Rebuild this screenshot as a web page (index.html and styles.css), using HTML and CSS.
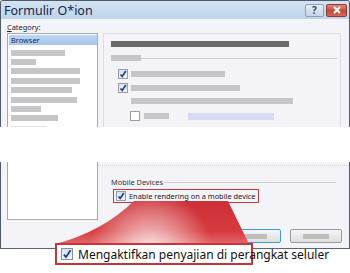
FILE: index.html
```html
<!DOCTYPE html>
<html lang="id">
<head>
    <meta charset="UTF-8">
    <title>Formulir Option</title>
<link rel="stylesheet" href="styles.css">
</head>
<body>
    <div class="scene">
        <!-- upper part of the dialog -->
        <div class="win win-top">
            <div class="titlebar">
                <span class="title">Formulir O*ion</span>
                <div class="tb-buttons">
                    <span class="tb-help">?</span>
                    <span class="tb-close">
                        <svg width="10" height="8" viewBox="0 0 10 8"><path d="M2 1 L8 7 M8 1 L2 7" stroke="#fff" stroke-width="2"/></svg>
                    </span>
                </div>
            </div>
            <div class="client">
                <div class="left-col">
                    <div class="cat-label"><u>C</u>ategory:</div>
                    <div class="listbox">
                        <div class="item selected">Browser</div>
                        <div class="item"><span class="blur" style="width:54px"></span></div>
                        <div class="item"><span class="blur" style="width:25px"></span></div>
                        <div class="item"><span class="blur" style="width:69px"></span></div>
                        <div class="item"><span class="blur" style="width:69px"></span></div>
                        <div class="item"><span class="blur" style="width:61px"></span></div>
                        <div class="item"><span class="blur" style="width:66px"></span></div>
                        <div class="item"><span class="blur" style="width:30px"></span></div>
                        <div class="item"><span class="blur" style="width:47px"></span></div>
                        <div class="item"><span class="blur faint" style="width:36px"></span></div>
                    </div>
                </div>
                <div class="panel">
                    <div class="dark-bar"></div>
                    <div class="sec-head">
                        <span class="blur" style="width:30px"></span>
                        <span class="rule"></span>
                    </div>
                    <div class="opt-row">
                        <span class="check on"><svg width="8" height="8" viewBox="0 0 8 8"><path d="M1.5 4.5 L3.2 6.5 L6.8 1" fill="none" stroke="#1d3b8c" stroke-width="1.6"/></svg></span>
                        <span class="blur" style="width:94px"></span>
                    </div>
                    <div class="opt-row">
                        <span class="check on"><svg width="8" height="8" viewBox="0 0 8 8"><path d="M1.5 4.5 L3.2 6.5 L6.8 1" fill="none" stroke="#1d3b8c" stroke-width="1.6"/></svg></span>
                        <span class="blur" style="width:109px"></span>
                    </div>
                    <div class="opt-text"><span class="blur" style="width:162px"></span></div>
                    <div class="opt-row sub">
                        <span class="check"></span>
                        <span class="blur" style="width:25px"></span>
                        <span class="blur blue" style="width:86px"></span>
                    </div>
                </div>
            </div>
        </div>

        <div class="tear"></div>

        <!-- lower part of the dialog -->
        <div class="win win-bottom">
            <div class="left-col">
                <div class="listbox listbox-end"></div>
            </div>
            <div class="lower-panel">
                <div class="legend">
                    <span>Mobile Devices</span>
                    <span class="rule"></span>
                </div>
                <div class="hl-row">
                    <span class="check on"><svg width="8" height="8" viewBox="0 0 8 8"><path d="M1.5 4.5 L3.2 6.5 L6.8 1" fill="none" stroke="#1d3b8c" stroke-width="1.6"/></svg></span>
                    <span class="hl-text">Enable rendering on a mobile device</span>
                </div>
                <div class="buttons">
                    <span class="btn default"><span class="blur" style="width:23px"></span></span>
                    <span class="btn"><span class="blur" style="width:26px"></span></span>
                </div>
            </div>
        </div>

        <!-- callout overlay -->
        <svg class="funnel" width="350" height="273" viewBox="0 0 350 273">
            <defs>
                <linearGradient id="fg" x1="0" y1="201" x2="0" y2="244" gradientUnits="userSpaceOnUse">
                    <stop offset="0" stop-color="#cc2f35"/>
                    <stop offset="0.7" stop-color="#d63a3e"/>
                    <stop offset="1" stop-color="#e4666a"/>
                </linearGradient>
                <radialGradient id="glow" cx="150" cy="252" r="62" gradientUnits="userSpaceOnUse">
                    <stop offset="0" stop-color="#fff" stop-opacity="0.85"/>
                    <stop offset="0.6" stop-color="#fff" stop-opacity="0.35"/>
                    <stop offset="1" stop-color="#fff" stop-opacity="0"/>
                </radialGradient>
            </defs>
            <path d="M134 201 L228 201 L249 244 L55 244 Q102 232 134 201 Z" fill="url(#fg)"/>
            <path d="M134 201 L228 201 L249 244 L55 244 Q102 232 134 201 Z" fill="url(#glow)"/>
        </svg>
        <div class="callout">
            <span class="check big on"><svg width="10" height="10" viewBox="0 0 8 8"><path d="M1.5 4.5 L3.2 6.5 L6.8 1" fill="none" stroke="#1d3b8c" stroke-width="1.4"/></svg></span>
            <span class="callout-text">Mengaktifkan penyajian di perangkat seluler</span>
        </div>
    </div>
</body>
</html>
```

FILE: styles.css
```css
body {
    margin: 0;
    background: #fff;
    font-family: "Noto Sans", "Liberation Sans", sans-serif;
}
.scene {
    position: relative;
    width: 350px;
    height: 273px;
    overflow: hidden;
}
.win {
    box-sizing: border-box;
    width: 350px;
    background: #f4f3f7;
    border-left: 1px solid #4f5b6b;
    border-right: 1px solid #4f5b6b;
    overflow: hidden;
}
.win-top {
    height: 127px;
    border-top: 1px solid #4f5b6b;
    border-radius: 3px 3px 0 0;
}
.titlebar {
    height: 18px;
    display: flex;
    align-items: center;
    justify-content: space-between;
    background: linear-gradient(#d3e3f2, #bed4ea);
}
.title {
    font-size: 12.5px;
    color: #16244a;
    padding-left: 3px;
}
.tb-buttons {
    display: flex;
    gap: 2px;
    margin-right: 2px;
}
.tb-help, .tb-close {
    box-sizing: border-box;
    height: 13px;
    display: flex;
    align-items: center;
    justify-content: center;
    border-radius: 2px;
}
.tb-help {
    width: 19px;
    font-size: 10px;
    font-weight: bold;
    color: #3b4a60;
    border: 1px solid #8da2ba;
    background: linear-gradient(#e4edf6, #c4d4e6);
}
.tb-close {
    width: 21px;
    border: 1px solid #8a3b34;
    background: linear-gradient(#e08a7c, #c6463a 55%, #d46a58);
}
.client {
    display: flex;
    padding: 2px 0 0 6px;
}
.left-col {
    width: 91px;
}
.cat-label {
    font-size: 7.4px;
    line-height: 12px;
    color: #222;
}
.listbox {
    box-sizing: border-box;
    width: 91px;
    height: 120px;
    background: #fff;
    border: 1px solid #a5a9b2;
    padding: 1px 0 0 1px;
}
.item {
    height: 9.4px;
    display: flex;
    align-items: center;
    padding-left: 2px;
}
.item.selected {
    height: 10px;
    margin-bottom: 3px;
    background: linear-gradient(#bcd6f4, #a5c6ee);
    font-size: 7.4px;
    color: #1a2a60;
}
.blur {
    display: inline-block;
    height: 6px;
    background: #c6c6c8;
}
.blur.faint {
    background: repeating-linear-gradient(90deg, #d6d6dc 0 1px, #f4f4f8 1px 2px);
    height: 3px;
}
.blur.blue {
    height: 7px;
    background: #d9d9f6;
    margin-left: 16px;
}
.panel {
    box-sizing: border-box;
    width: 238px;
    height: 110px;
    margin: 12px 0 0 5px;
    border: 1px solid #dcdce2;
    border-bottom: none;
    padding: 7px 0 0 7px;
}
.dark-bar {
    width: 178px;
    height: 6px;
    background: #6a6a6a;
}
.sec-head {
    display: flex;
    align-items: center;
    margin-top: 8px;
    margin-right: 3px;
}
.rule {
    flex: 1;
    height: 1px;
    background: #cfcfd4;
}
.opt-row {
    display: flex;
    align-items: center;
    gap: 3px;
    margin: 8px 0 0 7px;
}
.opt-row + .opt-row {
    margin-top: 4px;
}
.opt-row.sub {
    margin: 7px 0 0 19px;
}
.opt-row.sub .check {
    margin-right: 1px;
}
.check {
    box-sizing: border-box;
    width: 10px;
    height: 10px;
    display: inline-flex;
    align-items: center;
    justify-content: center;
    border: 1px solid #9a9ca2;
    background: #fff;
}
.check.on {
    background: linear-gradient(#d7e2f2, #eef3fa);
}
.opt-text {
    margin: 5px 0 0 20px;
    height: 6px;
    display: flex;
}
.tear {
    height: 35px;
    background: #fff;
}
.win-bottom {
    height: 87px;
    display: flex;
    padding-left: 6px;
    border-bottom: 1px solid #5a6472;
}
.listbox-end {
    height: 58px;
    border-top: none;
}
.lower-panel {
    flex: 1;
    margin-top: 3px;
    border-top: 1px dotted #d2d2d8;
    padding: 11px 13px 0 13px;
}
.legend {
    display: flex;
    align-items: center;
    gap: 1px;
    font-size: 7.4px;
    line-height: 10px;
    color: #333;
}
.hl-row {
    box-sizing: border-box;
    width: 146px;
    height: 14px;
    margin: 2px 0 0 2px;
    display: flex;
    align-items: center;
    gap: 3px;
    padding-left: 2px;
    border: 1px solid #c23a3e;
}
.hl-text {
    font-size: 7.4px;
    color: #1a1a1a;
    white-space: nowrap;
}
.buttons {
    display: flex;
    justify-content: flex-end;
    gap: 9px;
    margin-top: 26px;
    margin-right: -6px;
}
.btn {
    box-sizing: border-box;
    width: 52px;
    height: 14px;
    display: flex;
    align-items: center;
    justify-content: center;
    border: 1px solid #9b9b9b;
    border-radius: 2px;
    background: linear-gradient(#f6f6f6, #dedede);
}
.btn.default {
    border-color: #3d9bd6;
}
.btn .blur {
    height: 5px;
    background: #bdbdbd;
}
.funnel {
    position: absolute;
    left: 0;
    top: 0;
    pointer-events: none;
}
.callout {
    position: absolute;
    left: 55px;
    top: 243px;
    box-sizing: border-box;
    width: 198px;
    height: 22px;
    border: 2px solid #c83539;
    background: #fff;
    display: flex;
    align-items: center;
    padding-left: 4px;
}
.check.big {
    width: 12px;
    height: 12px;
    border-color: #8c8e94;
}
.callout-text {
    margin-left: 5px;
    font-size: 12px;
    color: #111;
    white-space: nowrap;
}
```
